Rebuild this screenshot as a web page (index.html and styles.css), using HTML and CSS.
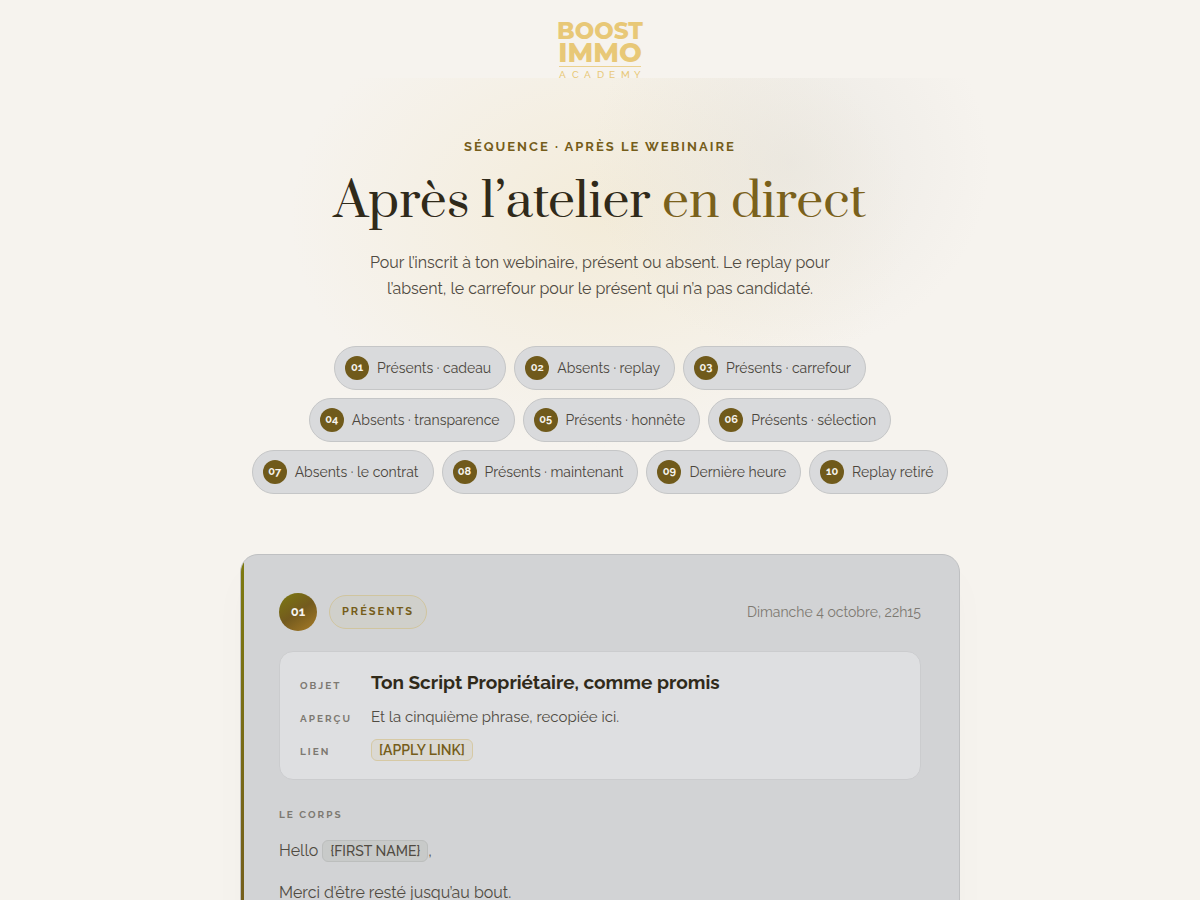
FILE: index.html
```
<!DOCTYPE html>
<html lang="fr">
<head>
    <meta charset="UTF-8">
    <meta name="viewport" content="width=device-width, initial-scale=1.0">
    <title>Après l’atelier en direct</title>
    <link rel="stylesheet" href="styles.css">
</head>
<body>
    <header class="header">
        <svg class="logo" viewBox="0 0 84 58" role="img" aria-label="Boost Immo Academy">
            <text class="logo-big" x="42" y="18" font-size="23">BOOST</text>
            <text class="logo-big" x="42" y="41" font-size="27">IMMO</text>
            <rect x="1" y="45" width="82" height="1" fill-opacity="0.8"/>
            <text class="logo-small" y="57" x="1 14 26 39 51 63 76">ACADEMY</text>
        </svg>
    </header>
    <main>
        <section class="hero">
            <p class="eyebrow">Séquence · Après le webinaire</p>
            <h1 class="title">Après l’atelier <em>en direct</em></h1>
            <p class="lead">Pour l’inscrit à ton webinaire, présent ou absent. Le replay pour<br>l’absent, le carrefour pour le présent qui n’a pas candidaté.</p>
            <nav class="chips">
                <a class="chip" href="#m01"><span class="chip-num">01</span>Présents · cadeau</a>
                <a class="chip" href="#m02"><span class="chip-num">02</span>Absents · replay</a>
                <a class="chip" href="#m03"><span class="chip-num">03</span>Présents · carrefour</a>
                <a class="chip" href="#m04"><span class="chip-num">04</span>Absents · transparence</a>
                <a class="chip" href="#m05"><span class="chip-num">05</span>Présents · honnête</a>
                <a class="chip" href="#m06"><span class="chip-num">06</span>Présents · sélection</a>
                <a class="chip" href="#m07"><span class="chip-num">07</span>Absents · le contrat</a>
                <a class="chip" href="#m08"><span class="chip-num">08</span>Présents · maintenant</a>
                <a class="chip" href="#m09"><span class="chip-num">09</span>Dernière heure</a>
                <a class="chip" href="#m10"><span class="chip-num">10</span>Replay retiré</a>
            </nav>
        </section>
        <article class="mail" id="m01">
            <div class="mail-head">
                <span class="mail-num">01</span>
                <span class="tag">Présents</span>
                <time class="date">Dimanche 4 octobre, 22h15</time>
            </div>
            <dl class="meta">
                <dt>Objet</dt>
                <dd class="subject">Ton Script Propriétaire, comme promis</dd>
                <dt>Aperçu</dt>
                <dd>Et la cinquième phrase, recopiée ici.</dd>
                <dt>Lien</dt>
                <dd><span class="token token-gold">[APPLY LINK]</span></dd>
            </dl>
            <h2 class="label">Le corps</h2>
            <div class="body-text">
                <p>Hello <span class="token">{FIRST NAME}</span>,</p>
                <p>Merci d’être resté jusqu’au bout.</p>
            </div>
        </article>
    </main>
</body>
</html>
```
FILE: styles.css
```
* {
    box-sizing: border-box;
}

body {
    margin: 0;
    background: #f6f3ee;
    color: #504b42;
    font-family: Raleway, Lato, sans-serif;
    font-size: 16px;
    line-height: 26px;
}

p, h1, h2, dl, dd {
    margin: 0;
}

.header {
    display: flex;
    justify-content: center;
    padding-top: 21px;
    height: 78px;
}

.logo {
    width: 84px;
    height: 58px;
    overflow: visible;
    fill: #e8c877;
}

.logo-big {
    font-family: Montserrat, Inter, sans-serif;
    font-weight: 800;
    text-anchor: middle;
}

.logo-small {
    font-family: Raleway, Lato, sans-serif;
    font-size: 10px;
    font-weight: 500;
}

.hero {
    padding: 56px 24px 60px;
    text-align: center;
    background:
        radial-gradient(ellipse 200px 190px at calc(50% + 190px) 85px, rgba(215, 213, 208, 0.32), rgba(215, 213, 208, 0)),
        radial-gradient(ellipse 310px 230px at 50% 140px, rgba(238, 222, 180, 0.36), rgba(238, 222, 180, 0));
}

.eyebrow {
    color: #755d1a;
    font-size: 13px;
    font-weight: 700;
    line-height: 26px;
    letter-spacing: 2px;
    text-transform: uppercase;
}

.title {
    margin-top: 10px;
    color: #302a1a;
    font-family: Prata, "Liberation Serif", serif;
    font-size: 48px;
    font-weight: 400;
    line-height: 64px;
}

.title em {
    color: #7a611c;
    font-style: normal;
}

.lead {
    margin-top: 16px;
    font-size: 16px;
}

.chips {
    display: flex;
    flex-wrap: wrap;
    justify-content: center;
    gap: 8px;
    max-width: 720px;
    margin: 44px auto 0;
}

.chip {
    display: flex;
    align-items: center;
    gap: 8px;
    height: 44px;
    padding: 0 14px 0 10px;
    border: 1px solid #c5c6c7;
    border-radius: 22px;
    background: #d9dadc;
    color: #4b463d;
    font-size: 14px;
    text-decoration: none;
}

.chip-num {
    width: 24px;
    border-radius: 50%;
    background: #705a1b;
    color: #f6f3ee;
    font-size: 11px;
    font-weight: 700;
    line-height: 24px;
    text-align: center;
}

.mail {
    position: relative;
    overflow: hidden;
    max-width: 720px;
    margin: 0 auto 60px;
    padding: 38px;
    border: 1px solid #bfc0c2;
    border-radius: 18px;
    background: #d2d3d5;
    box-shadow: 0 20px 40px rgba(120, 90, 30, 0.02);
}

/* gold edge */
.mail::before {
    content: "";
    position: absolute;
    top: 0;
    bottom: 0;
    left: 0;
    width: 3px;
    background: linear-gradient(#7d7a10, #735a1e);
}

.mail-head {
    display: flex;
    align-items: center;
    gap: 12px;
}

.mail-num {
    width: 38px;
    border-radius: 50%;
    background: linear-gradient(145deg, #7d7a10, #735a1e 50%, #a87c28);
    color: #f6f3ee;
    font-size: 13px;
    font-weight: 700;
    line-height: 38px;
    text-align: center;
}

.tag {
    padding: 0 12px;
    border: 1px solid #d0c59f;
    border-radius: 17px;
    background: #d0d0cb;
    color: #755d1a;
    font-size: 11px;
    font-weight: 700;
    line-height: 32px;
    letter-spacing: 2px;
    text-transform: uppercase;
}

.date {
    margin-left: auto;
    color: #7d7971;
    font-size: 14px;
}

.meta {
    display: grid;
    grid-template-columns: 55px 1fr;
    align-items: baseline;
    gap: 5px 16px;
    margin-top: 20px;
    padding: 17px 20px 14px;
    border: 1px solid #cbccce;
    border-radius: 14px;
    background: #dedfe1;
}

.meta dt,
.label {
    color: #7d7971;
    font-size: 10px;
    font-weight: 700;
    letter-spacing: 2px;
    text-transform: uppercase;
}

.meta dd {
    font-size: 15px;
}

.meta .subject {
    color: #302a1a;
    font-size: 19px;
    font-weight: 700;
}

.token {
    display: inline-block;
    padding: 0 7px;
    border: 1px solid #bcbebd;
    border-radius: 6px;
    background: #c8cac9;
    font-size: 14px;
    font-weight: 500;
    line-height: 20px;
}

.token-gold {
    border-color: #d6c9a4;
    background: #dbd9d3;
    color: #755d1a;
    font-weight: 600;
}

.label {
    margin-top: 22px;
}

.body-text {
    margin-top: 10px;
}

.body-text p {
    margin-bottom: 16px;
}
```
